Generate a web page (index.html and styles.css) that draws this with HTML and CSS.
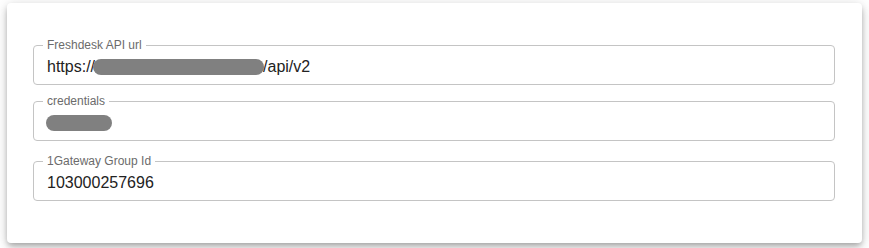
FILE: index.html
```html
<!DOCTYPE html>
<html lang="en">
<head>
  <meta charset="UTF-8" />
  <meta name="viewport" content="width=device-width, initial-scale=1.0"/>
  <title>Freshdesk settings</title>
  <link rel="stylesheet" href="styles.css">
</head>
<body>
  <div class="card">
    <fieldset class="field">
      <legend>Freshdesk API url</legend>
      <div class="value">https://<span class="redacted redacted-url"></span><span class="tail">/api/v2</span></div>
    </fieldset>

    <fieldset class="field field-secret">
      <legend>credentials</legend>
      <div class="value"><span class="redacted redacted-key"></span></div>
    </fieldset>

    <fieldset class="field">
      <legend>1Gateway Group Id</legend>
      <div class="value">103000257696</div>
    </fieldset>
  </div>
</body>
</html>
```

FILE: styles.css
```css
body {
  margin: 0;
  padding: 3px 7px 5px;
  background: #fff;
  font-family: "Liberation Sans", Arial, sans-serif;
}

.card {
  background: #fff;
  border-radius: 4px;
  padding: 36px 27px 42px 26px;
  box-shadow: 0 3px 5px -1px rgba(0,0,0,0.2), 0 5px 8px 0 rgba(0,0,0,0.14), 0 1px 14px 0 rgba(0,0,0,0.12);
}

.field {
  margin: 0 0 10px;
  padding: 0 13px;
  height: 46px;
  box-sizing: border-box;
  border: 1px solid #c4c4c4;
  border-radius: 4px;
  min-width: 0;
}

.field:last-child {
  margin-bottom: 0;
}

.field-secret {
  margin-bottom: 14px;
}

.field legend {
  margin-left: -4px;
  padding: 0 4px;
  font-size: 12px;
  line-height: 12px;
  color: #6b6b6b;
}

.value {
  font-size: 16px;
  line-height: 19px;
  color: #222;
  padding-top: 6px;
  white-space: nowrap;
}

.redacted {
  display: inline-block;
  height: 16px;
  border-radius: 8px;
  background: #808080;
  vertical-align: -3px;
}

.redacted-url {
  width: 171px;
  margin-left: -2px;
}

.tail {
  margin-left: -1px;
}

.redacted-key {
  width: 66px;
  margin-left: -1px;
}
```
